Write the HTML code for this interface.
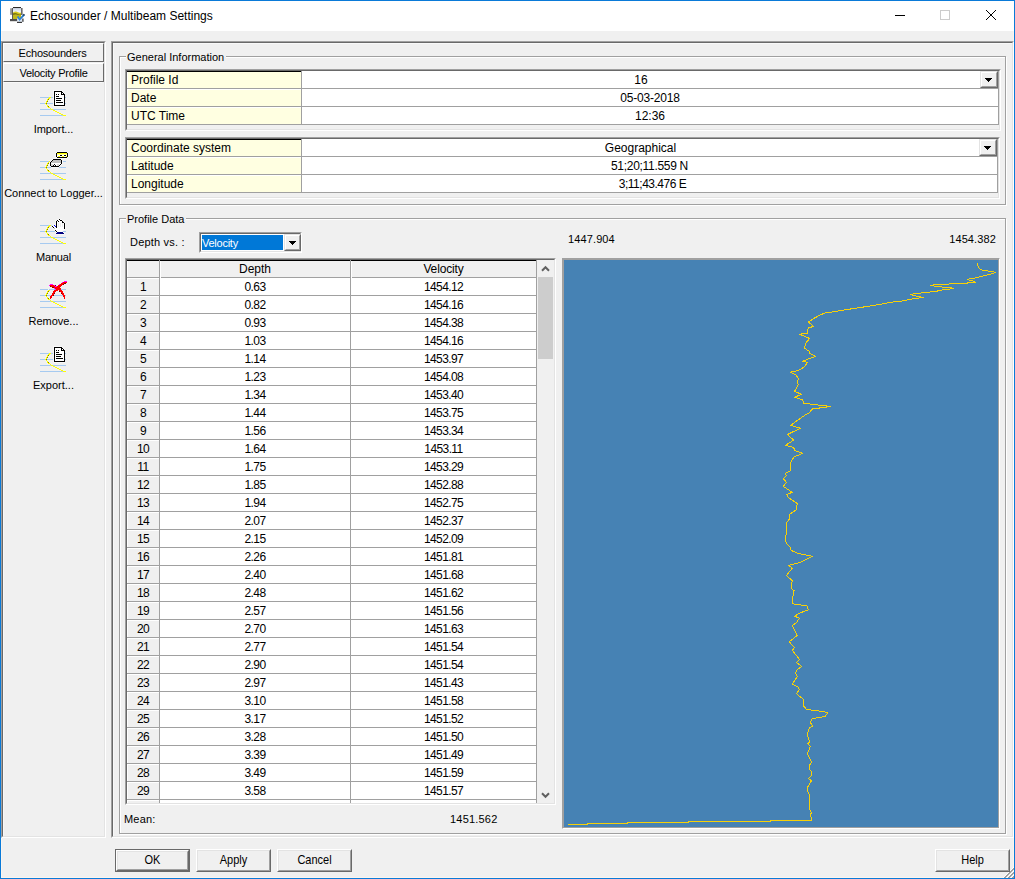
<!DOCTYPE html>
<html lang="en"><head><meta charset="utf-8"><title>Echosounder / Multibeam Settings</title>
<style>
html,body{margin:0;padding:0;}
body{width:1015px;height:879px;overflow:hidden;background:#f0f0f0;position:relative;
 font-family:"Liberation Sans",sans-serif;font-size:11px;color:#000;}
*{box-sizing:border-box;}
.a{position:absolute;}
.t{position:absolute;white-space:nowrap;line-height:1;}
.s11{font-size:11px;letter-spacing:-0.25px;}
.s12{font-size:12px;}
.sunk{position:absolute;border:1px solid;border-color:#a0a0a0 #fff #fff #a0a0a0;}
.sunk>.in{position:absolute;left:0;top:0;right:0;bottom:0;border:1px solid;border-color:#696969 #e3e3e3 #e3e3e3 #696969;}
.gb{position:absolute;border:1px solid #a0a0a0;box-shadow:1px 1px 0 #fff, inset 1px 1px 0 #fff;}
.gbl{position:absolute;background:#f0f0f0;white-space:nowrap;line-height:13px;height:13px;padding:0 2px;font-size:11px;letter-spacing:0px;}
.btn{position:absolute;border:1px solid;border-color:#fff #696969 #696969 #fff;background:#f0f0f0;}
.btn>.in{position:absolute;left:0;top:0;right:0;bottom:0;border:1px solid;border-color:#e3e3e3 #a0a0a0 #a0a0a0 #e3e3e3;}
.btn.sb{border-color:#e3e3e3 #696969 #696969 #e3e3e3;}
.btn.sb>.in{border-color:#fff #a0a0a0 #a0a0a0 #fff;}
.btn .lb{position:absolute;left:0;right:0;text-align:center;line-height:1;font-size:11px;white-space:nowrap;transform:scaleY(1.125);transform-origin:50% 10px;}
.hl{position:absolute;height:1px;}
.vl{position:absolute;width:1px;}
.fc{position:absolute;background:#ffffe1;border-top:1px solid #fff;}
.cell{position:absolute;text-align:center;white-space:nowrap;font-size:12px;line-height:16px;letter-spacing:-0.6px;}
</style></head><body>

<div class="a" style="left:0;top:0;width:1015px;height:879px;border:1px solid #0a7ad8;"></div>
<div class="a" style="left:1px;top:1px;width:1013px;height:30px;background:#fff;"></div>
<svg class="a" style="left:8px;top:5px" width="20" height="20" viewBox="8 5 20 20">
<defs><linearGradient id="sky" x1="0" y1="0" x2="0" y2="1"><stop offset="0" stop-color="#cfd9ea"/><stop offset="1" stop-color="#eef2fa"/></linearGradient>
<linearGradient id="chk" x1="0" y1="1" x2="1" y2="0"><stop offset="0" stop-color="#3a8ae0"/><stop offset="0.7" stop-color="#2478c8"/><stop offset="1" stop-color="#0c2038"/></linearGradient></defs>
<rect x="10.3" y="8.3" width="1.5" height="6.5" fill="#7a7a7a"/>
<rect x="12" y="8" width="1" height="12" fill="#5a5a5a"/>
<rect x="21" y="8" width="1.6" height="7" fill="#6a6a6a"/>
<rect x="13" y="7" width="8" height="1.3" fill="#2a2a2a"/>
<rect x="13" y="8.3" width="8" height="3.5" fill="url(#sky)"/>
<path d="M13 12.6 Q15.5 10.4 18 12.2 Q19.5 13 21 12.4 V19 H13Z" fill="#d4c81c"/>
<path d="M13 13.6 Q16 12.9 18 14.1 Q19.5 14.9 21 14.3 V15.3 Q19.5 15.7 18 15.1 Q16 14.1 13 14.9Z" fill="#5e5610"/>
<rect x="13" y="14.6" width="8" height="4.4" fill="#bcb41c" opacity="0.85"/>
<rect x="10" y="19" width="7.5" height="2.2" fill="#505050"/>
<rect x="17.3" y="18.2" width="6.2" height="4" fill="#dfe8f4"/>
<rect x="22" y="18.6" width="1.7" height="3.2" fill="#6a6a6a"/>
<rect x="17" y="21.8" width="5" height="1.2" fill="#3a3a3a"/>
<path d="M17.6 16.6 L19.6 19.6 L24.4 14.4" fill="none" stroke="url(#chk)" stroke-width="1.8" stroke-linecap="butt"/>
</svg>
<div class="t" id="title" style="left:30px;top:10px;font-size:12px;letter-spacing:0px;">Echosounder / Multibeam Settings</div>
<div class="a" style="left:895px;top:15px;width:10px;height:1px;background:#000;"></div>
<div class="a" style="left:940px;top:10px;width:10px;height:10px;border:1px solid #cccccc;"></div>
<svg class="a" style="left:985px;top:9px" width="12" height="12" viewBox="0 0 12 12"><path d="M1 1 L11 11 M11 1 L1 11" stroke="#000" stroke-width="1" fill="none"/></svg>
<div class="a" style="left:1px;top:31px;width:1013px;height:847px;border:1px solid #fcf5ee;border-top:none;"></div>
<div class="sunk" style="left:1px;top:41px;width:105px;height:797px;"><div class="in"></div></div>
<div class="a" style="left:3px;top:43px;width:101px;height:19px;border:1px solid;border-color:#fff #696969 #696969 #fff;"></div>
<div class="a" style="left:3px;top:63px;width:101px;height:19px;border:1px solid;border-color:#fff #696969 #696969 #fff;"></div>
<div class="a" style="left:3px;top:82px;width:100px;height:754px;border:1px solid;border-color:#f9f9f9 transparent transparent #f9f9f9;"></div>
<div class="t s11" id="bt1" style="left:2px;width:101px;text-align:center;top:48px;letter-spacing:-0.2px;">Echosounders</div>
<div class="t s11" id="bt2" style="left:3px;width:101px;text-align:center;top:68px;">Velocity Profile</div>
<svg class="a" style="left:36px;top:81px" width="36" height="36" viewBox="36 81 36 36" shape-rendering="crispEdges"><rect x="53" y="90" width="9" height="1" fill="#f8f8f8"/><rect x="53" y="91" width="1" height="1" fill="#f8f8f8"/><rect x="54" y="91" width="8" height="1" fill="#000000"/><rect x="62" y="91" width="1" height="1" fill="#f8f8f8"/><rect x="53" y="92" width="1" height="1" fill="#f8f8f8"/><rect x="54" y="92" width="1" height="1" fill="#000000"/><rect x="55" y="92" width="6" height="1" fill="#ffffff"/><rect x="61" y="92" width="2" height="1" fill="#000000"/><rect x="63" y="92" width="1" height="1" fill="#f8f8f8"/><rect x="53" y="93" width="1" height="1" fill="#f8f8f8"/><rect x="54" y="93" width="1" height="1" fill="#000000"/><rect x="55" y="93" width="6" height="1" fill="#ffffff"/><rect x="61" y="93" width="1" height="1" fill="#000000"/><rect x="62" y="93" width="1" height="1" fill="#ffffff"/><rect x="63" y="93" width="1" height="1" fill="#000000"/><rect x="64" y="93" width="1" height="1" fill="#f8f8f8"/><rect x="53" y="94" width="1" height="1" fill="#f8f8f8"/><rect x="54" y="94" width="1" height="1" fill="#000000"/><rect x="55" y="94" width="1" height="1" fill="#ffffff"/><rect x="56" y="94" width="1" height="1" fill="#000000"/><rect x="57" y="94" width="1" height="1" fill="#ffffff"/><rect x="58" y="94" width="1" height="1" fill="#000000"/><rect x="59" y="94" width="2" height="1" fill="#ffffff"/><rect x="61" y="94" width="4" height="1" fill="#000000"/><rect x="53" y="95" width="1" height="1" fill="#f8f8f8"/><rect x="54" y="95" width="1" height="1" fill="#000000"/><rect x="55" y="95" width="9" height="1" fill="#ffffff"/><rect x="64" y="95" width="1" height="1" fill="#000000"/><rect x="53" y="96" width="1" height="1" fill="#f8f8f8"/><rect x="54" y="96" width="1" height="1" fill="#000000"/><rect x="55" y="96" width="1" height="1" fill="#ffffff"/><rect x="56" y="96" width="3" height="1" fill="#000000"/><rect x="59" y="96" width="5" height="1" fill="#ffffff"/><rect x="64" y="96" width="1" height="1" fill="#000000"/><rect x="40" y="97" width="9" height="1" fill="#a6caf0"/><rect x="49" y="97" width="2" height="1" fill="#ffff00"/><rect x="51" y="97" width="2" height="1" fill="#a6caf0"/><rect x="53" y="97" width="1" height="1" fill="#f8f8f8"/><rect x="54" y="97" width="1" height="1" fill="#000000"/><rect x="55" y="97" width="9" height="1" fill="#ffffff"/><rect x="64" y="97" width="1" height="1" fill="#000000"/><rect x="65" y="97" width="1" height="1" fill="#a6caf0"/><rect x="48" y="98" width="2" height="1" fill="#ffff00"/><rect x="53" y="98" width="1" height="1" fill="#f8f8f8"/><rect x="54" y="98" width="1" height="1" fill="#000000"/><rect x="55" y="98" width="1" height="1" fill="#ffffff"/><rect x="56" y="98" width="6" height="1" fill="#000000"/><rect x="62" y="98" width="2" height="1" fill="#ffffff"/><rect x="64" y="98" width="1" height="1" fill="#000000"/><rect x="47" y="99" width="1" height="1" fill="#ffff00"/><rect x="48" y="99" width="1" height="1" fill="#808000"/><rect x="53" y="99" width="1" height="1" fill="#f8f8f8"/><rect x="54" y="99" width="1" height="1" fill="#000000"/><rect x="55" y="99" width="9" height="1" fill="#ffffff"/><rect x="64" y="99" width="1" height="1" fill="#000000"/><rect x="47" y="100" width="1" height="1" fill="#ffff00"/><rect x="53" y="100" width="1" height="1" fill="#f8f8f8"/><rect x="54" y="100" width="1" height="1" fill="#000000"/><rect x="55" y="100" width="1" height="1" fill="#ffffff"/><rect x="56" y="100" width="5" height="1" fill="#000000"/><rect x="61" y="100" width="3" height="1" fill="#ffffff"/><rect x="64" y="100" width="1" height="1" fill="#000000"/><rect x="46" y="101" width="1" height="1" fill="#ffff00"/><rect x="47" y="101" width="1" height="1" fill="#808000"/><rect x="53" y="101" width="1" height="1" fill="#f8f8f8"/><rect x="54" y="101" width="1" height="1" fill="#000000"/><rect x="55" y="101" width="9" height="1" fill="#ffffff"/><rect x="64" y="101" width="1" height="1" fill="#000000"/><rect x="46" y="102" width="1" height="1" fill="#ffff00"/><rect x="53" y="102" width="1" height="1" fill="#f8f8f8"/><rect x="54" y="102" width="1" height="1" fill="#000000"/><rect x="55" y="102" width="1" height="1" fill="#ffffff"/><rect x="56" y="102" width="7" height="1" fill="#000000"/><rect x="63" y="102" width="1" height="1" fill="#ffffff"/><rect x="64" y="102" width="1" height="1" fill="#000000"/><rect x="40" y="103" width="5" height="1" fill="#a6caf0"/><rect x="45" y="103" width="1" height="1" fill="#ffff00"/><rect x="46" y="103" width="1" height="1" fill="#808000"/><rect x="47" y="103" width="6" height="1" fill="#a6caf0"/><rect x="53" y="103" width="1" height="1" fill="#f8f8f8"/><rect x="54" y="103" width="1" height="1" fill="#000000"/><rect x="55" y="103" width="9" height="1" fill="#ffffff"/><rect x="64" y="103" width="1" height="1" fill="#000000"/><rect x="65" y="103" width="1" height="1" fill="#a6caf0"/><rect x="46" y="104" width="1" height="1" fill="#ffff00"/><rect x="53" y="104" width="1" height="1" fill="#f8f8f8"/><rect x="54" y="104" width="1" height="1" fill="#000000"/><rect x="55" y="104" width="9" height="1" fill="#ffffff"/><rect x="64" y="104" width="1" height="1" fill="#000000"/><rect x="47" y="105" width="1" height="1" fill="#ffff00"/><rect x="53" y="105" width="1" height="1" fill="#f8f8f8"/><rect x="54" y="105" width="11" height="1" fill="#000000"/><rect x="47" y="106" width="1" height="1" fill="#ffff00"/><rect x="48" y="106" width="1" height="1" fill="#808000"/><rect x="53" y="106" width="12" height="1" fill="#f8f8f8"/><rect x="48" y="107" width="2" height="1" fill="#ffff00"/><rect x="50" y="108" width="1" height="1" fill="#ffff00"/><rect x="40" y="109" width="11" height="1" fill="#a6caf0"/><rect x="51" y="109" width="2" height="1" fill="#ffff00"/><rect x="53" y="109" width="13" height="1" fill="#a6caf0"/><rect x="53" y="110" width="2" height="1" fill="#ffff00"/><rect x="55" y="111" width="2" height="1" fill="#ffff00"/><rect x="57" y="112" width="2" height="1" fill="#ffff00"/><rect x="59" y="113" width="2" height="1" fill="#ffff00"/><rect x="61" y="114" width="2" height="1" fill="#ffff00"/><rect x="40" y="115" width="23" height="1" fill="#a6caf0"/><rect x="63" y="115" width="3" height="1" fill="#ffff00"/></svg>
<svg class="a" style="left:36px;top:145px" width="36" height="36" viewBox="36 145 36 36" shape-rendering="crispEdges"><rect x="57" y="151" width="10" height="1" fill="#f8f8f8"/><rect x="56" y="152" width="1" height="1" fill="#f8f8f8"/><rect x="57" y="152" width="10" height="1" fill="#000000"/><rect x="67" y="152" width="1" height="1" fill="#f8f8f8"/><rect x="55" y="153" width="1" height="1" fill="#f8f8f8"/><rect x="56" y="153" width="1" height="1" fill="#000000"/><rect x="57" y="153" width="10" height="1" fill="#ffff00"/><rect x="67" y="153" width="1" height="1" fill="#000000"/><rect x="68" y="153" width="1" height="1" fill="#f8f8f8"/><rect x="55" y="154" width="1" height="1" fill="#f8f8f8"/><rect x="56" y="154" width="1" height="1" fill="#000000"/><rect x="57" y="154" width="10" height="1" fill="#ffffa0"/><rect x="67" y="154" width="1" height="1" fill="#000000"/><rect x="68" y="154" width="1" height="1" fill="#f8f8f8"/><rect x="55" y="155" width="1" height="1" fill="#f8f8f8"/><rect x="56" y="155" width="1" height="1" fill="#000000"/><rect x="57" y="155" width="3" height="1" fill="#ffffff"/><rect x="60" y="155" width="2" height="1" fill="#000000"/><rect x="62" y="155" width="2" height="1" fill="#ffffff"/><rect x="64" y="155" width="2" height="1" fill="#000000"/><rect x="66" y="155" width="1" height="1" fill="#ffffff"/><rect x="67" y="155" width="1" height="1" fill="#000000"/><rect x="68" y="155" width="1" height="1" fill="#f8f8f8"/><rect x="55" y="156" width="1" height="1" fill="#f8f8f8"/><rect x="56" y="156" width="1" height="1" fill="#000000"/><rect x="57" y="156" width="1" height="1" fill="#ffffff"/><rect x="58" y="156" width="2" height="1" fill="#ffff00"/><rect x="60" y="156" width="2" height="1" fill="#ffffff"/><rect x="62" y="156" width="2" height="1" fill="#ffff00"/><rect x="64" y="156" width="2" height="1" fill="#ffffff"/><rect x="66" y="156" width="1" height="1" fill="#ffff00"/><rect x="67" y="156" width="1" height="1" fill="#000000"/><rect x="68" y="156" width="1" height="1" fill="#f8f8f8"/><rect x="56" y="157" width="1" height="1" fill="#f8f8f8"/><rect x="57" y="157" width="10" height="1" fill="#000000"/><rect x="67" y="157" width="1" height="1" fill="#f8f8f8"/><rect x="53" y="158" width="14" height="1" fill="#f8f8f8"/><rect x="52" y="159" width="1" height="1" fill="#f8f8f8"/><rect x="53" y="159" width="8" height="1" fill="#000000"/><rect x="61" y="159" width="1" height="1" fill="#f8f8f8"/><rect x="51" y="160" width="1" height="1" fill="#f8f8f8"/><rect x="52" y="160" width="1" height="1" fill="#000000"/><rect x="53" y="160" width="8" height="1" fill="#c0c0c0"/><rect x="61" y="160" width="1" height="1" fill="#000000"/><rect x="62" y="160" width="1" height="1" fill="#f8f8f8"/><rect x="40" y="161" width="9" height="1" fill="#a6caf0"/><rect x="49" y="161" width="1" height="1" fill="#ffff00"/><rect x="50" y="161" width="1" height="1" fill="#f8f8f8"/><rect x="51" y="161" width="1" height="1" fill="#000000"/><rect x="52" y="161" width="9" height="1" fill="#c0c0c0"/><rect x="61" y="161" width="1" height="1" fill="#000000"/><rect x="62" y="161" width="1" height="1" fill="#f8f8f8"/><rect x="63" y="161" width="3" height="1" fill="#a6caf0"/><rect x="48" y="162" width="1" height="1" fill="#ffff00"/><rect x="49" y="162" width="1" height="1" fill="#f8f8f8"/><rect x="50" y="162" width="1" height="1" fill="#000000"/><rect x="51" y="162" width="10" height="1" fill="#c0c0c0"/><rect x="61" y="162" width="1" height="1" fill="#000000"/><rect x="62" y="162" width="1" height="1" fill="#f8f8f8"/><rect x="47" y="163" width="1" height="1" fill="#ffff00"/><rect x="48" y="163" width="1" height="1" fill="#808000"/><rect x="49" y="163" width="1" height="1" fill="#f8f8f8"/><rect x="50" y="163" width="1" height="1" fill="#000000"/><rect x="51" y="163" width="10" height="1" fill="#ffffff"/><rect x="61" y="163" width="1" height="1" fill="#000000"/><rect x="62" y="163" width="1" height="1" fill="#f8f8f8"/><rect x="47" y="164" width="1" height="1" fill="#ffff00"/><rect x="49" y="164" width="1" height="1" fill="#f8f8f8"/><rect x="50" y="164" width="1" height="1" fill="#000000"/><rect x="51" y="164" width="2" height="1" fill="#dcdcdc"/><rect x="53" y="164" width="1" height="1" fill="#ffffff"/><rect x="54" y="164" width="1" height="1" fill="#000000"/><rect x="55" y="164" width="2" height="1" fill="#ffffff"/><rect x="57" y="164" width="2" height="1" fill="#dcdcdc"/><rect x="59" y="164" width="1" height="1" fill="#ffffff"/><rect x="60" y="164" width="1" height="1" fill="#000000"/><rect x="61" y="164" width="1" height="1" fill="#f8f8f8"/><rect x="46" y="165" width="1" height="1" fill="#ffff00"/><rect x="47" y="165" width="1" height="1" fill="#808000"/><rect x="49" y="165" width="1" height="1" fill="#f8f8f8"/><rect x="50" y="165" width="1" height="1" fill="#000000"/><rect x="51" y="165" width="2" height="1" fill="#dcdcdc"/><rect x="53" y="165" width="1" height="1" fill="#000000"/><rect x="54" y="165" width="1" height="1" fill="#ffffff"/><rect x="55" y="165" width="1" height="1" fill="#000000"/><rect x="56" y="165" width="1" height="1" fill="#ffffff"/><rect x="57" y="165" width="2" height="1" fill="#dcdcdc"/><rect x="59" y="165" width="1" height="1" fill="#000000"/><rect x="60" y="165" width="1" height="1" fill="#f8f8f8"/><rect x="46" y="166" width="1" height="1" fill="#ffff00"/><rect x="50" y="166" width="1" height="1" fill="#f8f8f8"/><rect x="51" y="166" width="8" height="1" fill="#000000"/><rect x="59" y="166" width="1" height="1" fill="#f8f8f8"/><rect x="40" y="167" width="5" height="1" fill="#a6caf0"/><rect x="45" y="167" width="1" height="1" fill="#ffff00"/><rect x="46" y="167" width="1" height="1" fill="#808000"/><rect x="47" y="167" width="4" height="1" fill="#a6caf0"/><rect x="51" y="167" width="8" height="1" fill="#f8f8f8"/><rect x="59" y="167" width="7" height="1" fill="#a6caf0"/><rect x="46" y="168" width="1" height="1" fill="#ffff00"/><rect x="47" y="169" width="1" height="1" fill="#ffff00"/><rect x="47" y="170" width="1" height="1" fill="#ffff00"/><rect x="48" y="170" width="1" height="1" fill="#808000"/><rect x="48" y="171" width="2" height="1" fill="#ffff00"/><rect x="50" y="172" width="1" height="1" fill="#ffff00"/><rect x="40" y="173" width="11" height="1" fill="#a6caf0"/><rect x="51" y="173" width="2" height="1" fill="#ffff00"/><rect x="53" y="173" width="13" height="1" fill="#a6caf0"/><rect x="53" y="174" width="2" height="1" fill="#ffff00"/><rect x="55" y="175" width="2" height="1" fill="#ffff00"/><rect x="57" y="176" width="2" height="1" fill="#ffff00"/><rect x="59" y="177" width="2" height="1" fill="#ffff00"/><rect x="61" y="178" width="2" height="1" fill="#ffff00"/><rect x="40" y="179" width="23" height="1" fill="#a6caf0"/><rect x="63" y="179" width="3" height="1" fill="#ffff00"/></svg>
<svg class="a" style="left:36px;top:209px" width="36" height="36" viewBox="36 209 36 36" shape-rendering="crispEdges"><rect x="59" y="218" width="1" height="1" fill="#f8f8f8"/><rect x="57" y="219" width="2" height="1" fill="#f8f8f8"/><rect x="59" y="219" width="1" height="1" fill="#000000"/><rect x="60" y="219" width="2" height="1" fill="#f8f8f8"/><rect x="56" y="220" width="1" height="1" fill="#f8f8f8"/><rect x="57" y="220" width="1" height="1" fill="#000000"/><rect x="58" y="220" width="2" height="1" fill="#ffffff"/><rect x="60" y="220" width="2" height="1" fill="#000000"/><rect x="62" y="220" width="1" height="1" fill="#f8f8f8"/><rect x="55" y="221" width="1" height="1" fill="#f8f8f8"/><rect x="56" y="221" width="1" height="1" fill="#000000"/><rect x="57" y="221" width="1" height="1" fill="#ffffff"/><rect x="58" y="221" width="1" height="1" fill="#000000"/><rect x="59" y="221" width="3" height="1" fill="#ffffff"/><rect x="62" y="221" width="1" height="1" fill="#000000"/><rect x="63" y="221" width="1" height="1" fill="#f8f8f8"/><rect x="55" y="222" width="1" height="1" fill="#f8f8f8"/><rect x="56" y="222" width="1" height="1" fill="#000000"/><rect x="57" y="222" width="5" height="1" fill="#ffffff"/><rect x="62" y="222" width="2" height="1" fill="#000000"/><rect x="64" y="222" width="1" height="1" fill="#f8f8f8"/><rect x="55" y="223" width="1" height="1" fill="#f8f8f8"/><rect x="56" y="223" width="1" height="1" fill="#000000"/><rect x="57" y="223" width="1" height="1" fill="#ffffff"/><rect x="58" y="223" width="1" height="1" fill="#ececec"/><rect x="59" y="223" width="1" height="1" fill="#ffffff"/><rect x="60" y="223" width="1" height="1" fill="#ececec"/><rect x="61" y="223" width="1" height="1" fill="#ffffff"/><rect x="62" y="223" width="1" height="1" fill="#ececec"/><rect x="63" y="223" width="1" height="1" fill="#ffffff"/><rect x="64" y="223" width="1" height="1" fill="#000000"/><rect x="65" y="223" width="1" height="1" fill="#f8f8f8"/><rect x="54" y="224" width="2" height="1" fill="#f8f8f8"/><rect x="56" y="224" width="1" height="1" fill="#000000"/><rect x="57" y="224" width="1" height="1" fill="#ffffff"/><rect x="58" y="224" width="1" height="1" fill="#ececec"/><rect x="59" y="224" width="1" height="1" fill="#ffffff"/><rect x="60" y="224" width="1" height="1" fill="#ececec"/><rect x="61" y="224" width="1" height="1" fill="#ffffff"/><rect x="62" y="224" width="1" height="1" fill="#ececec"/><rect x="63" y="224" width="1" height="1" fill="#ffffff"/><rect x="64" y="224" width="1" height="1" fill="#000000"/><rect x="65" y="224" width="1" height="1" fill="#f8f8f8"/><rect x="40" y="225" width="9" height="1" fill="#a6caf0"/><rect x="49" y="225" width="2" height="1" fill="#ffff00"/><rect x="51" y="225" width="1" height="1" fill="#a6caf0"/><rect x="52" y="225" width="2" height="1" fill="#f8f8f8"/><rect x="54" y="225" width="1" height="1" fill="#0000ff"/><rect x="55" y="225" width="1" height="1" fill="#f8f8f8"/><rect x="56" y="225" width="1" height="1" fill="#000000"/><rect x="57" y="225" width="1" height="1" fill="#ffffff"/><rect x="58" y="225" width="1" height="1" fill="#ececec"/><rect x="59" y="225" width="1" height="1" fill="#ffffff"/><rect x="60" y="225" width="1" height="1" fill="#ececec"/><rect x="61" y="225" width="1" height="1" fill="#ffffff"/><rect x="62" y="225" width="1" height="1" fill="#ececec"/><rect x="63" y="225" width="1" height="1" fill="#ffffff"/><rect x="64" y="225" width="1" height="1" fill="#000000"/><rect x="65" y="225" width="1" height="1" fill="#f8f8f8"/><rect x="48" y="226" width="2" height="1" fill="#ffff00"/><rect x="51" y="226" width="1" height="1" fill="#f8f8f8"/><rect x="52" y="226" width="1" height="1" fill="#000000"/><rect x="53" y="226" width="2" height="1" fill="#ffffff"/><rect x="55" y="226" width="1" height="1" fill="#0000ff"/><rect x="56" y="226" width="1" height="1" fill="#000000"/><rect x="57" y="226" width="1" height="1" fill="#ffffff"/><rect x="58" y="226" width="1" height="1" fill="#ececec"/><rect x="59" y="226" width="1" height="1" fill="#ffffff"/><rect x="60" y="226" width="1" height="1" fill="#ececec"/><rect x="61" y="226" width="1" height="1" fill="#ffffff"/><rect x="62" y="226" width="1" height="1" fill="#ececec"/><rect x="63" y="226" width="1" height="1" fill="#ffffff"/><rect x="64" y="226" width="1" height="1" fill="#000000"/><rect x="65" y="226" width="1" height="1" fill="#f8f8f8"/><rect x="47" y="227" width="1" height="1" fill="#ffff00"/><rect x="48" y="227" width="1" height="1" fill="#808000"/><rect x="52" y="227" width="1" height="1" fill="#f8f8f8"/><rect x="53" y="227" width="1" height="1" fill="#000000"/><rect x="54" y="227" width="2" height="1" fill="#ffffff"/><rect x="56" y="227" width="1" height="1" fill="#000000"/><rect x="57" y="227" width="7" height="1" fill="#ffffff"/><rect x="64" y="227" width="1" height="1" fill="#000000"/><rect x="65" y="227" width="1" height="1" fill="#f8f8f8"/><rect x="47" y="228" width="1" height="1" fill="#ffff00"/><rect x="53" y="228" width="1" height="1" fill="#f8f8f8"/><rect x="54" y="228" width="1" height="1" fill="#c0c0c0"/><rect x="55" y="228" width="9" height="1" fill="#ffffff"/><rect x="64" y="228" width="1" height="1" fill="#000000"/><rect x="65" y="228" width="1" height="1" fill="#f8f8f8"/><rect x="46" y="229" width="1" height="1" fill="#ffff00"/><rect x="47" y="229" width="1" height="1" fill="#808000"/><rect x="54" y="229" width="1" height="1" fill="#f8f8f8"/><rect x="55" y="229" width="9" height="1" fill="#ffffff"/><rect x="64" y="229" width="1" height="1" fill="#f8f8f8"/><rect x="46" y="230" width="1" height="1" fill="#ffff00"/><rect x="54" y="230" width="1" height="1" fill="#f8f8f8"/><rect x="55" y="230" width="1" height="1" fill="#000000"/><rect x="56" y="230" width="7" height="1" fill="#ffffff"/><rect x="63" y="230" width="1" height="1" fill="#f8f8f8"/><rect x="40" y="231" width="5" height="1" fill="#a6caf0"/><rect x="45" y="231" width="1" height="1" fill="#ffff00"/><rect x="46" y="231" width="1" height="1" fill="#808000"/><rect x="47" y="231" width="8" height="1" fill="#a6caf0"/><rect x="55" y="231" width="1" height="1" fill="#f8f8f8"/><rect x="56" y="231" width="1" height="1" fill="#000000"/><rect x="57" y="231" width="5" height="1" fill="#ffffff"/><rect x="62" y="231" width="1" height="1" fill="#f8f8f8"/><rect x="63" y="231" width="3" height="1" fill="#a6caf0"/><rect x="46" y="232" width="1" height="1" fill="#ffff00"/><rect x="56" y="232" width="1" height="1" fill="#f8f8f8"/><rect x="57" y="232" width="6" height="1" fill="#000080"/><rect x="63" y="232" width="1" height="1" fill="#f8f8f8"/><rect x="47" y="233" width="1" height="1" fill="#ffff00"/><rect x="55" y="233" width="1" height="1" fill="#f8f8f8"/><rect x="56" y="233" width="8" height="1" fill="#000080"/><rect x="64" y="233" width="1" height="1" fill="#f8f8f8"/><rect x="47" y="234" width="1" height="1" fill="#ffff00"/><rect x="48" y="234" width="1" height="1" fill="#808000"/><rect x="56" y="234" width="8" height="1" fill="#f8f8f8"/><rect x="48" y="235" width="2" height="1" fill="#ffff00"/><rect x="50" y="236" width="1" height="1" fill="#ffff00"/><rect x="40" y="237" width="11" height="1" fill="#a6caf0"/><rect x="51" y="237" width="2" height="1" fill="#ffff00"/><rect x="53" y="237" width="13" height="1" fill="#a6caf0"/><rect x="53" y="238" width="2" height="1" fill="#ffff00"/><rect x="55" y="239" width="2" height="1" fill="#ffff00"/><rect x="57" y="240" width="2" height="1" fill="#ffff00"/><rect x="59" y="241" width="2" height="1" fill="#ffff00"/><rect x="61" y="242" width="2" height="1" fill="#ffff00"/><rect x="40" y="243" width="23" height="1" fill="#a6caf0"/><rect x="63" y="243" width="3" height="1" fill="#ffff00"/></svg>
<svg class="a" style="left:36px;top:273px" width="36" height="36" viewBox="36 273 36 36" shape-rendering="crispEdges"><rect x="64" y="281" width="3" height="1" fill="#ff00ff"/><rect x="62" y="282" width="1" height="1" fill="#ff00ff"/><rect x="63" y="282" width="4" height="1" fill="#ff0000"/><rect x="61" y="283" width="3" height="1" fill="#ff0000"/><rect x="64" y="283" width="2" height="1" fill="#800000"/><rect x="50" y="284" width="3" height="1" fill="#ff00ff"/><rect x="59" y="284" width="1" height="1" fill="#ff00ff"/><rect x="60" y="284" width="3" height="1" fill="#ff0000"/><rect x="63" y="284" width="1" height="1" fill="#800000"/><rect x="49" y="285" width="1" height="1" fill="#ff00ff"/><rect x="50" y="285" width="4" height="1" fill="#ff0000"/><rect x="54" y="285" width="1" height="1" fill="#ff00ff"/><rect x="55" y="285" width="1" height="1" fill="#800000"/><rect x="58" y="285" width="4" height="1" fill="#ff0000"/><rect x="50" y="286" width="1" height="1" fill="#800000"/><rect x="51" y="286" width="4" height="1" fill="#ff0000"/><rect x="55" y="286" width="2" height="1" fill="#ff00ff"/><rect x="57" y="286" width="4" height="1" fill="#ff0000"/><rect x="52" y="287" width="2" height="1" fill="#800000"/><rect x="54" y="287" width="6" height="1" fill="#ff0000"/><rect x="54" y="288" width="1" height="1" fill="#ff00ff"/><rect x="55" y="288" width="6" height="1" fill="#ff0000"/><rect x="40" y="289" width="8" height="1" fill="#a6caf0"/><rect x="48" y="289" width="1" height="1" fill="#f8f8f8"/><rect x="49" y="289" width="6" height="1" fill="#a6caf0"/><rect x="55" y="289" width="1" height="1" fill="#ff00ff"/><rect x="56" y="289" width="5" height="1" fill="#ff0000"/><rect x="61" y="289" width="5" height="1" fill="#a6caf0"/><rect x="48" y="290" width="2" height="1" fill="#ffff00"/><rect x="54" y="290" width="4" height="1" fill="#ff0000"/><rect x="59" y="290" width="3" height="1" fill="#ff0000"/><rect x="47" y="291" width="1" height="1" fill="#ffff00"/><rect x="48" y="291" width="1" height="1" fill="#808000"/><rect x="53" y="291" width="3" height="1" fill="#ff0000"/><rect x="59" y="291" width="1" height="1" fill="#800000"/><rect x="60" y="291" width="3" height="1" fill="#ff0000"/><rect x="47" y="292" width="1" height="1" fill="#ffff00"/><rect x="53" y="292" width="2" height="1" fill="#ff0000"/><rect x="61" y="292" width="2" height="1" fill="#ff0000"/><rect x="46" y="293" width="1" height="1" fill="#ffff00"/><rect x="47" y="293" width="1" height="1" fill="#808000"/><rect x="52" y="293" width="2" height="1" fill="#ff0000"/><rect x="54" y="293" width="1" height="1" fill="#800000"/><rect x="61" y="293" width="1" height="1" fill="#800000"/><rect x="62" y="293" width="2" height="1" fill="#ff0000"/><rect x="46" y="294" width="1" height="1" fill="#ffff00"/><rect x="52" y="294" width="2" height="1" fill="#ff0000"/><rect x="62" y="294" width="2" height="1" fill="#ff0000"/><rect x="40" y="295" width="5" height="1" fill="#a6caf0"/><rect x="45" y="295" width="1" height="1" fill="#ffff00"/><rect x="46" y="295" width="1" height="1" fill="#808000"/><rect x="47" y="295" width="4" height="1" fill="#a6caf0"/><rect x="51" y="295" width="2" height="1" fill="#ff0000"/><rect x="53" y="295" width="1" height="1" fill="#800000"/><rect x="54" y="295" width="9" height="1" fill="#a6caf0"/><rect x="63" y="295" width="2" height="1" fill="#ff0000"/><rect x="65" y="295" width="1" height="1" fill="#a6caf0"/><rect x="46" y="296" width="1" height="1" fill="#ffff00"/><rect x="50" y="296" width="2" height="1" fill="#ff0000"/><rect x="63" y="296" width="2" height="1" fill="#ff0000"/><rect x="47" y="297" width="1" height="1" fill="#ffff00"/><rect x="50" y="297" width="2" height="1" fill="#ff0000"/><rect x="64" y="297" width="1" height="1" fill="#ff0000"/><rect x="47" y="298" width="1" height="1" fill="#ffff00"/><rect x="48" y="298" width="1" height="1" fill="#808000"/><rect x="50" y="298" width="1" height="1" fill="#ff0000"/><rect x="64" y="298" width="1" height="1" fill="#ff0000"/><rect x="48" y="299" width="2" height="1" fill="#ffff00"/><rect x="50" y="300" width="1" height="1" fill="#ffff00"/><rect x="40" y="301" width="11" height="1" fill="#a6caf0"/><rect x="51" y="301" width="2" height="1" fill="#ffff00"/><rect x="53" y="301" width="13" height="1" fill="#a6caf0"/><rect x="53" y="302" width="2" height="1" fill="#ffff00"/><rect x="55" y="303" width="2" height="1" fill="#ffff00"/><rect x="57" y="304" width="2" height="1" fill="#ffff00"/><rect x="59" y="305" width="2" height="1" fill="#ffff00"/><rect x="61" y="306" width="2" height="1" fill="#ffff00"/><rect x="40" y="307" width="23" height="1" fill="#a6caf0"/><rect x="63" y="307" width="3" height="1" fill="#ffff00"/></svg>
<svg class="a" style="left:36px;top:337px" width="36" height="36" viewBox="36 337 36 36" shape-rendering="crispEdges"><rect x="53" y="346" width="9" height="1" fill="#f8f8f8"/><rect x="53" y="347" width="1" height="1" fill="#f8f8f8"/><rect x="54" y="347" width="8" height="1" fill="#000000"/><rect x="62" y="347" width="1" height="1" fill="#f8f8f8"/><rect x="53" y="348" width="1" height="1" fill="#f8f8f8"/><rect x="54" y="348" width="1" height="1" fill="#000000"/><rect x="55" y="348" width="6" height="1" fill="#ffffff"/><rect x="61" y="348" width="2" height="1" fill="#000000"/><rect x="63" y="348" width="1" height="1" fill="#f8f8f8"/><rect x="53" y="349" width="1" height="1" fill="#f8f8f8"/><rect x="54" y="349" width="1" height="1" fill="#000000"/><rect x="55" y="349" width="6" height="1" fill="#ffffff"/><rect x="61" y="349" width="1" height="1" fill="#000000"/><rect x="62" y="349" width="1" height="1" fill="#ffffff"/><rect x="63" y="349" width="1" height="1" fill="#000000"/><rect x="64" y="349" width="1" height="1" fill="#f8f8f8"/><rect x="53" y="350" width="1" height="1" fill="#f8f8f8"/><rect x="54" y="350" width="1" height="1" fill="#000000"/><rect x="55" y="350" width="1" height="1" fill="#ffffff"/><rect x="56" y="350" width="1" height="1" fill="#000000"/><rect x="57" y="350" width="1" height="1" fill="#ffffff"/><rect x="58" y="350" width="1" height="1" fill="#000000"/><rect x="59" y="350" width="2" height="1" fill="#ffffff"/><rect x="61" y="350" width="4" height="1" fill="#000000"/><rect x="53" y="351" width="1" height="1" fill="#f8f8f8"/><rect x="54" y="351" width="1" height="1" fill="#000000"/><rect x="55" y="351" width="9" height="1" fill="#ffffff"/><rect x="64" y="351" width="1" height="1" fill="#000000"/><rect x="53" y="352" width="1" height="1" fill="#f8f8f8"/><rect x="54" y="352" width="1" height="1" fill="#000000"/><rect x="55" y="352" width="1" height="1" fill="#ffffff"/><rect x="56" y="352" width="3" height="1" fill="#000000"/><rect x="59" y="352" width="5" height="1" fill="#ffffff"/><rect x="64" y="352" width="1" height="1" fill="#000000"/><rect x="40" y="353" width="9" height="1" fill="#a6caf0"/><rect x="49" y="353" width="2" height="1" fill="#ffff00"/><rect x="51" y="353" width="2" height="1" fill="#a6caf0"/><rect x="53" y="353" width="1" height="1" fill="#f8f8f8"/><rect x="54" y="353" width="1" height="1" fill="#000000"/><rect x="55" y="353" width="9" height="1" fill="#ffffff"/><rect x="64" y="353" width="1" height="1" fill="#000000"/><rect x="65" y="353" width="1" height="1" fill="#a6caf0"/><rect x="48" y="354" width="2" height="1" fill="#ffff00"/><rect x="53" y="354" width="1" height="1" fill="#f8f8f8"/><rect x="54" y="354" width="1" height="1" fill="#000000"/><rect x="55" y="354" width="1" height="1" fill="#ffffff"/><rect x="56" y="354" width="6" height="1" fill="#000000"/><rect x="62" y="354" width="2" height="1" fill="#ffffff"/><rect x="64" y="354" width="1" height="1" fill="#000000"/><rect x="47" y="355" width="1" height="1" fill="#ffff00"/><rect x="48" y="355" width="1" height="1" fill="#808000"/><rect x="53" y="355" width="1" height="1" fill="#f8f8f8"/><rect x="54" y="355" width="1" height="1" fill="#000000"/><rect x="55" y="355" width="9" height="1" fill="#ffffff"/><rect x="64" y="355" width="1" height="1" fill="#000000"/><rect x="47" y="356" width="1" height="1" fill="#ffff00"/><rect x="53" y="356" width="1" height="1" fill="#f8f8f8"/><rect x="54" y="356" width="1" height="1" fill="#000000"/><rect x="55" y="356" width="1" height="1" fill="#ffffff"/><rect x="56" y="356" width="5" height="1" fill="#000000"/><rect x="61" y="356" width="3" height="1" fill="#ffffff"/><rect x="64" y="356" width="1" height="1" fill="#000000"/><rect x="46" y="357" width="1" height="1" fill="#ffff00"/><rect x="47" y="357" width="1" height="1" fill="#808000"/><rect x="53" y="357" width="1" height="1" fill="#f8f8f8"/><rect x="54" y="357" width="1" height="1" fill="#000000"/><rect x="55" y="357" width="9" height="1" fill="#ffffff"/><rect x="64" y="357" width="1" height="1" fill="#000000"/><rect x="46" y="358" width="1" height="1" fill="#ffff00"/><rect x="53" y="358" width="1" height="1" fill="#f8f8f8"/><rect x="54" y="358" width="1" height="1" fill="#000000"/><rect x="55" y="358" width="1" height="1" fill="#ffffff"/><rect x="56" y="358" width="7" height="1" fill="#000000"/><rect x="63" y="358" width="1" height="1" fill="#ffffff"/><rect x="64" y="358" width="1" height="1" fill="#000000"/><rect x="40" y="359" width="5" height="1" fill="#a6caf0"/><rect x="45" y="359" width="1" height="1" fill="#ffff00"/><rect x="46" y="359" width="1" height="1" fill="#808000"/><rect x="47" y="359" width="6" height="1" fill="#a6caf0"/><rect x="53" y="359" width="1" height="1" fill="#f8f8f8"/><rect x="54" y="359" width="1" height="1" fill="#000000"/><rect x="55" y="359" width="9" height="1" fill="#ffffff"/><rect x="64" y="359" width="1" height="1" fill="#000000"/><rect x="65" y="359" width="1" height="1" fill="#a6caf0"/><rect x="46" y="360" width="1" height="1" fill="#ffff00"/><rect x="53" y="360" width="1" height="1" fill="#f8f8f8"/><rect x="54" y="360" width="1" height="1" fill="#000000"/><rect x="55" y="360" width="9" height="1" fill="#ffffff"/><rect x="64" y="360" width="1" height="1" fill="#000000"/><rect x="47" y="361" width="1" height="1" fill="#ffff00"/><rect x="53" y="361" width="1" height="1" fill="#f8f8f8"/><rect x="54" y="361" width="11" height="1" fill="#000000"/><rect x="47" y="362" width="1" height="1" fill="#ffff00"/><rect x="48" y="362" width="1" height="1" fill="#808000"/><rect x="53" y="362" width="12" height="1" fill="#f8f8f8"/><rect x="48" y="363" width="2" height="1" fill="#ffff00"/><rect x="50" y="364" width="1" height="1" fill="#ffff00"/><rect x="40" y="365" width="11" height="1" fill="#a6caf0"/><rect x="51" y="365" width="2" height="1" fill="#ffff00"/><rect x="53" y="365" width="13" height="1" fill="#a6caf0"/><rect x="53" y="366" width="2" height="1" fill="#ffff00"/><rect x="55" y="367" width="2" height="1" fill="#ffff00"/><rect x="57" y="368" width="2" height="1" fill="#ffff00"/><rect x="59" y="369" width="2" height="1" fill="#ffff00"/><rect x="61" y="370" width="2" height="1" fill="#ffff00"/><rect x="40" y="371" width="23" height="1" fill="#a6caf0"/><rect x="63" y="371" width="3" height="1" fill="#ffff00"/></svg>
<div class="t s11" id="l1" style="left:3px;width:101px;text-align:center;top:124px;letter-spacing:-0.12px;">Import...</div>
<div class="t s11" id="l2" style="left:3px;width:101px;text-align:center;top:188px;letter-spacing:-0.02px;">Connect to Logger...</div>
<div class="t s11" id="l3" style="left:3px;width:101px;text-align:center;top:252px;letter-spacing:-0.2px;">Manual</div>
<div class="t s11" id="l4" style="left:3px;width:101px;text-align:center;top:316px;letter-spacing:-0.02px;">Remove...</div>
<div class="t s11" id="l5" style="left:3px;width:101px;text-align:center;top:380px;letter-spacing:0.0px;">Export...</div>
<div class="sunk" style="left:111px;top:41px;width:903px;height:797px;"><div class="in" style="box-shadow:inset 1px 1px 0 #f9f9f9;"></div></div>
<div class="gb" style="left:119px;top:56px;width:887px;height:149px;"></div>
<div class="gbl" id="g1" style="left:126px;top:51px;padding-left:1px;">General Information</div>
<div class="gb" style="left:119px;top:218px;width:887px;height:616px;"></div>
<div class="gbl" id="g2" style="left:126px;top:213px;padding-left:1px;">Profile Data</div>
<div class="sunk" style="left:125px;top:69px;width:876px;height:62px;"><div class="in"></div></div><div class="a" style="left:302px;top:71px;width:696px;height:53px;background:#fff;"></div><div class="hl" style="left:127px;top:71px;width:174px;background:#000;"></div><div class="a" style="left:127px;top:72px;width:174px;height:16px;background:#ffffe1;"></div><div class="vl" style="left:127px;top:72px;height:16px;background:#fff;"></div><div class="hl" style="left:127px;top:88px;width:871px;background:#a0a0a0;"></div><div class="t s12" id="pn0" style="left:131px;top:74px;">Profile Id</div><div class="t s12" id="pv0" style="left:302px;width:678px;text-align:center;top:74px;letter-spacing:0px;">16</div><div class="a" style="left:127px;top:89px;width:174px;height:17px;background:#ffffe1;border-top:1px solid #fff;"></div><div class="vl" style="left:127px;top:90px;height:16px;background:#fff;"></div><div class="hl" style="left:127px;top:106px;width:871px;background:#a0a0a0;"></div><div class="t s12" id="pn1" style="left:131px;top:92px;">Date</div><div class="t s12" id="pv1" style="left:302px;width:696px;text-align:center;top:92px;letter-spacing:-0.2px;">05-03-2018</div><div class="a" style="left:127px;top:107px;width:174px;height:17px;background:#ffffe1;border-top:1px solid #fff;"></div><div class="vl" style="left:127px;top:108px;height:16px;background:#fff;"></div><div class="hl" style="left:127px;top:124px;width:871px;background:#a0a0a0;"></div><div class="t s12" id="pn2" style="left:131px;top:110px;">UTC Time</div><div class="t s12" id="pv2" style="left:302px;width:696px;text-align:center;top:110px;letter-spacing:0px;">12:36</div><div class="vl" style="left:301px;top:71px;height:54px;background:#a0a0a0;"></div><div class="vl" style="left:998px;top:71px;height:54px;background:#a0a0a0;"></div><div class="btn sb" style="left:980px;top:71px;width:18px;height:17px;"><div class="in"></div></div><svg class="a" style="left:985px;top:78px" width="7" height="4" viewBox="0 0 7 4" shape-rendering="crispEdges"><path d="M0 0H7L3.5 4Z" fill="#000"/><rect x="0" y="0" width="7" height="1"/><rect x="1" y="1" width="5" height="1"/><rect x="2" y="2" width="3" height="1"/><rect x="3" y="3" width="1" height="1"/></svg>
<div class="sunk" style="left:125px;top:137px;width:875px;height:62px;"><div class="in"></div></div><div class="a" style="left:302px;top:139px;width:695px;height:53px;background:#fff;"></div><div class="hl" style="left:127px;top:139px;width:174px;background:#000;"></div><div class="a" style="left:127px;top:140px;width:174px;height:16px;background:#ffffe1;"></div><div class="vl" style="left:127px;top:140px;height:16px;background:#fff;"></div><div class="hl" style="left:127px;top:156px;width:870px;background:#a0a0a0;"></div><div class="t s12" id="qn0" style="left:131px;top:142px;">Coordinate system</div><div class="t s12" id="qv0" style="left:302px;width:677px;text-align:center;top:142px;letter-spacing:0px;">Geographical</div><div class="a" style="left:127px;top:157px;width:174px;height:17px;background:#ffffe1;border-top:1px solid #fff;"></div><div class="vl" style="left:127px;top:158px;height:16px;background:#fff;"></div><div class="hl" style="left:127px;top:174px;width:870px;background:#a0a0a0;"></div><div class="t s12" id="qn1" style="left:131px;top:160px;">Latitude</div><div class="t s12" id="qv1" style="left:302px;width:695px;text-align:center;top:160px;letter-spacing:-0.3px;">51;20;11.559 N</div><div class="a" style="left:127px;top:175px;width:174px;height:17px;background:#ffffe1;border-top:1px solid #fff;"></div><div class="vl" style="left:127px;top:176px;height:16px;background:#fff;"></div><div class="hl" style="left:127px;top:192px;width:870px;background:#a0a0a0;"></div><div class="t s12" id="qn2" style="left:131px;top:178px;">Longitude</div><div class="t s12" id="qv2" style="left:305px;width:695px;text-align:center;top:178px;letter-spacing:-0.5px;">3;11;43.476 E</div><div class="vl" style="left:301px;top:139px;height:54px;background:#a0a0a0;"></div><div class="vl" style="left:997px;top:139px;height:54px;background:#a0a0a0;"></div><div class="btn sb" style="left:979px;top:139px;width:18px;height:17px;"><div class="in"></div></div><svg class="a" style="left:984px;top:146px" width="7" height="4" viewBox="0 0 7 4" shape-rendering="crispEdges"><path d="M0 0H7L3.5 4Z" fill="#000"/><rect x="0" y="0" width="7" height="1"/><rect x="1" y="1" width="5" height="1"/><rect x="2" y="2" width="3" height="1"/><rect x="3" y="3" width="1" height="1"/></svg>
<div class="t s11" id="dv" style="left:130px;top:237px;letter-spacing:0.2px;">Depth vs. :</div>
<div class="sunk" style="left:199px;top:232px;width:103px;height:21px;"><div class="in" style="background:#fff;"></div></div>
<div class="a" style="left:202px;top:235px;width:81px;height:15px;background:#0078d7;"></div>
<div class="t s11" id="vel" style="left:202px;top:238px;color:#fff;">Velocity</div>
<div class="btn sb" style="left:284px;top:234px;width:17px;height:17px;"><div class="in"></div></div>
<svg class="a" style="left:289px;top:241px" width="7" height="4" viewBox="0 0 7 4" shape-rendering="crispEdges"><rect x="0" y="0" width="7" height="1"/><rect x="1" y="1" width="5" height="1"/><rect x="2" y="2" width="3" height="1"/><rect x="3" y="3" width="1" height="1"/></svg>
<div class="t s11" id="cl" style="left:568px;top:234px;letter-spacing:0.12px;">1447.904</div>
<div class="t s11" id="cr" style="right:19px;top:234px;letter-spacing:0.12px;">1454.382</div>
<div class="sunk" style="left:125px;top:258px;width:431px;height:547px;"><div class="in"></div></div>
<div class="a" style="left:127px;top:260px;width:427px;height:543px;background:#fff;overflow:hidden;" id="tb">
<div class="hl" style="left:0;top:0;width:410px;background:#000;"></div><div class="a" style="left:0;top:1px;width:32px;height:16px;background:#f0f0f0;"></div><div class="a" style="left:33px;top:1px;width:190px;height:16px;background:#f0f0f0;border-left:1px solid #fff;"></div><div class="a" style="left:224px;top:1px;width:186px;height:16px;background:#f0f0f0;border-left:1px solid #fff;"></div><div class="cell" id="hd" style="left:33px;width:190px;top:1px;letter-spacing:0;">Depth</div><div class="cell" id="hv" style="left:224px;width:185px;top:1px;letter-spacing:-0.15px;">Velocity</div><div class="a" style="left:0;top:18px;width:32px;height:525px;background:#f0f0f0;"></div><div class="vl" style="left:0;top:1px;height:542px;background:#fff;"></div><div class="hl" style="left:0;top:17px;width:410px;background:#a0a0a0;"></div><div class="hl" style="left:0;top:18px;width:32px;background:#fff;"></div><div class="hl" style="left:0;top:35px;width:410px;background:#a0a0a0;"></div><div class="hl" style="left:0;top:36px;width:32px;background:#fff;"></div><div class="hl" style="left:0;top:53px;width:410px;background:#a0a0a0;"></div><div class="hl" style="left:0;top:54px;width:32px;background:#fff;"></div><div class="hl" style="left:0;top:71px;width:410px;background:#a0a0a0;"></div><div class="hl" style="left:0;top:72px;width:32px;background:#fff;"></div><div class="hl" style="left:0;top:89px;width:410px;background:#a0a0a0;"></div><div class="hl" style="left:0;top:90px;width:32px;background:#fff;"></div><div class="hl" style="left:0;top:107px;width:410px;background:#a0a0a0;"></div><div class="hl" style="left:0;top:108px;width:32px;background:#fff;"></div><div class="hl" style="left:0;top:125px;width:410px;background:#a0a0a0;"></div><div class="hl" style="left:0;top:126px;width:32px;background:#fff;"></div><div class="hl" style="left:0;top:143px;width:410px;background:#a0a0a0;"></div><div class="hl" style="left:0;top:144px;width:32px;background:#fff;"></div><div class="hl" style="left:0;top:161px;width:410px;background:#a0a0a0;"></div><div class="hl" style="left:0;top:162px;width:32px;background:#fff;"></div><div class="hl" style="left:0;top:179px;width:410px;background:#a0a0a0;"></div><div class="hl" style="left:0;top:180px;width:32px;background:#fff;"></div><div class="hl" style="left:0;top:197px;width:410px;background:#a0a0a0;"></div><div class="hl" style="left:0;top:198px;width:32px;background:#fff;"></div><div class="hl" style="left:0;top:215px;width:410px;background:#a0a0a0;"></div><div class="hl" style="left:0;top:216px;width:32px;background:#fff;"></div><div class="hl" style="left:0;top:233px;width:410px;background:#a0a0a0;"></div><div class="hl" style="left:0;top:234px;width:32px;background:#fff;"></div><div class="hl" style="left:0;top:251px;width:410px;background:#a0a0a0;"></div><div class="hl" style="left:0;top:252px;width:32px;background:#fff;"></div><div class="hl" style="left:0;top:269px;width:410px;background:#a0a0a0;"></div><div class="hl" style="left:0;top:270px;width:32px;background:#fff;"></div><div class="hl" style="left:0;top:287px;width:410px;background:#a0a0a0;"></div><div class="hl" style="left:0;top:288px;width:32px;background:#fff;"></div><div class="hl" style="left:0;top:305px;width:410px;background:#a0a0a0;"></div><div class="hl" style="left:0;top:306px;width:32px;background:#fff;"></div><div class="hl" style="left:0;top:323px;width:410px;background:#a0a0a0;"></div><div class="hl" style="left:0;top:324px;width:32px;background:#fff;"></div><div class="hl" style="left:0;top:341px;width:410px;background:#a0a0a0;"></div><div class="hl" style="left:0;top:342px;width:32px;background:#fff;"></div><div class="hl" style="left:0;top:359px;width:410px;background:#a0a0a0;"></div><div class="hl" style="left:0;top:360px;width:32px;background:#fff;"></div><div class="hl" style="left:0;top:377px;width:410px;background:#a0a0a0;"></div><div class="hl" style="left:0;top:378px;width:32px;background:#fff;"></div><div class="hl" style="left:0;top:395px;width:410px;background:#a0a0a0;"></div><div class="hl" style="left:0;top:396px;width:32px;background:#fff;"></div><div class="hl" style="left:0;top:413px;width:410px;background:#a0a0a0;"></div><div class="hl" style="left:0;top:414px;width:32px;background:#fff;"></div><div class="hl" style="left:0;top:431px;width:410px;background:#a0a0a0;"></div><div class="hl" style="left:0;top:432px;width:32px;background:#fff;"></div><div class="hl" style="left:0;top:449px;width:410px;background:#a0a0a0;"></div><div class="hl" style="left:0;top:450px;width:32px;background:#fff;"></div><div class="hl" style="left:0;top:467px;width:410px;background:#a0a0a0;"></div><div class="hl" style="left:0;top:468px;width:32px;background:#fff;"></div><div class="hl" style="left:0;top:485px;width:410px;background:#a0a0a0;"></div><div class="hl" style="left:0;top:486px;width:32px;background:#fff;"></div><div class="hl" style="left:0;top:503px;width:410px;background:#a0a0a0;"></div><div class="hl" style="left:0;top:504px;width:32px;background:#fff;"></div><div class="hl" style="left:0;top:521px;width:410px;background:#a0a0a0;"></div><div class="hl" style="left:0;top:522px;width:32px;background:#fff;"></div><div class="hl" style="left:0;top:539px;width:410px;background:#a0a0a0;"></div><div class="hl" style="left:0;top:540px;width:32px;background:#fff;"></div><div class="hl" style="left:0;top:557px;width:410px;background:#a0a0a0;"></div><div class="hl" style="left:0;top:558px;width:32px;background:#fff;"></div><div class="cell" style="left:0;width:32px;top:19px;">1</div><div class="cell" style="left:33px;width:190px;top:19px;">0.63</div><div class="cell" style="left:224px;width:185px;top:19px;">1454.12</div><div class="cell" style="left:0;width:32px;top:37px;">2</div><div class="cell" style="left:33px;width:190px;top:37px;">0.82</div><div class="cell" style="left:224px;width:185px;top:37px;">1454.16</div><div class="cell" style="left:0;width:32px;top:55px;">3</div><div class="cell" style="left:33px;width:190px;top:55px;">0.93</div><div class="cell" style="left:224px;width:185px;top:55px;">1454.38</div><div class="cell" style="left:0;width:32px;top:73px;">4</div><div class="cell" style="left:33px;width:190px;top:73px;">1.03</div><div class="cell" style="left:224px;width:185px;top:73px;">1454.16</div><div class="cell" style="left:0;width:32px;top:91px;">5</div><div class="cell" style="left:33px;width:190px;top:91px;">1.14</div><div class="cell" style="left:224px;width:185px;top:91px;">1453.97</div><div class="cell" style="left:0;width:32px;top:109px;">6</div><div class="cell" style="left:33px;width:190px;top:109px;">1.23</div><div class="cell" style="left:224px;width:185px;top:109px;">1454.08</div><div class="cell" style="left:0;width:32px;top:127px;">7</div><div class="cell" style="left:33px;width:190px;top:127px;">1.34</div><div class="cell" style="left:224px;width:185px;top:127px;">1453.40</div><div class="cell" style="left:0;width:32px;top:145px;">8</div><div class="cell" style="left:33px;width:190px;top:145px;">1.44</div><div class="cell" style="left:224px;width:185px;top:145px;">1453.75</div><div class="cell" style="left:0;width:32px;top:163px;">9</div><div class="cell" style="left:33px;width:190px;top:163px;">1.56</div><div class="cell" style="left:224px;width:185px;top:163px;">1453.34</div><div class="cell" style="left:0;width:32px;top:181px;">10</div><div class="cell" style="left:33px;width:190px;top:181px;">1.64</div><div class="cell" style="left:224px;width:185px;top:181px;">1453.11</div><div class="cell" style="left:0;width:32px;top:199px;">11</div><div class="cell" style="left:33px;width:190px;top:199px;">1.75</div><div class="cell" style="left:224px;width:185px;top:199px;">1453.29</div><div class="cell" style="left:0;width:32px;top:217px;">12</div><div class="cell" style="left:33px;width:190px;top:217px;">1.85</div><div class="cell" style="left:224px;width:185px;top:217px;">1452.88</div><div class="cell" style="left:0;width:32px;top:235px;">13</div><div class="cell" style="left:33px;width:190px;top:235px;">1.94</div><div class="cell" style="left:224px;width:185px;top:235px;">1452.75</div><div class="cell" style="left:0;width:32px;top:253px;">14</div><div class="cell" style="left:33px;width:190px;top:253px;">2.07</div><div class="cell" style="left:224px;width:185px;top:253px;">1452.37</div><div class="cell" style="left:0;width:32px;top:271px;">15</div><div class="cell" style="left:33px;width:190px;top:271px;">2.15</div><div class="cell" style="left:224px;width:185px;top:271px;">1452.09</div><div class="cell" style="left:0;width:32px;top:289px;">16</div><div class="cell" style="left:33px;width:190px;top:289px;">2.26</div><div class="cell" style="left:224px;width:185px;top:289px;">1451.81</div><div class="cell" style="left:0;width:32px;top:307px;">17</div><div class="cell" style="left:33px;width:190px;top:307px;">2.40</div><div class="cell" style="left:224px;width:185px;top:307px;">1451.68</div><div class="cell" style="left:0;width:32px;top:325px;">18</div><div class="cell" style="left:33px;width:190px;top:325px;">2.48</div><div class="cell" style="left:224px;width:185px;top:325px;">1451.62</div><div class="cell" style="left:0;width:32px;top:343px;">19</div><div class="cell" style="left:33px;width:190px;top:343px;">2.57</div><div class="cell" style="left:224px;width:185px;top:343px;">1451.56</div><div class="cell" style="left:0;width:32px;top:361px;">20</div><div class="cell" style="left:33px;width:190px;top:361px;">2.70</div><div class="cell" style="left:224px;width:185px;top:361px;">1451.63</div><div class="cell" style="left:0;width:32px;top:379px;">21</div><div class="cell" style="left:33px;width:190px;top:379px;">2.77</div><div class="cell" style="left:224px;width:185px;top:379px;">1451.54</div><div class="cell" style="left:0;width:32px;top:397px;">22</div><div class="cell" style="left:33px;width:190px;top:397px;">2.90</div><div class="cell" style="left:224px;width:185px;top:397px;">1451.54</div><div class="cell" style="left:0;width:32px;top:415px;">23</div><div class="cell" style="left:33px;width:190px;top:415px;">2.97</div><div class="cell" style="left:224px;width:185px;top:415px;">1451.43</div><div class="cell" style="left:0;width:32px;top:433px;">24</div><div class="cell" style="left:33px;width:190px;top:433px;">3.10</div><div class="cell" style="left:224px;width:185px;top:433px;">1451.58</div><div class="cell" style="left:0;width:32px;top:451px;">25</div><div class="cell" style="left:33px;width:190px;top:451px;">3.17</div><div class="cell" style="left:224px;width:185px;top:451px;">1451.52</div><div class="cell" style="left:0;width:32px;top:469px;">26</div><div class="cell" style="left:33px;width:190px;top:469px;">3.28</div><div class="cell" style="left:224px;width:185px;top:469px;">1451.50</div><div class="cell" style="left:0;width:32px;top:487px;">27</div><div class="cell" style="left:33px;width:190px;top:487px;">3.39</div><div class="cell" style="left:224px;width:185px;top:487px;">1451.49</div><div class="cell" style="left:0;width:32px;top:505px;">28</div><div class="cell" style="left:33px;width:190px;top:505px;">3.49</div><div class="cell" style="left:224px;width:185px;top:505px;">1451.59</div><div class="cell" style="left:0;width:32px;top:523px;">29</div><div class="cell" style="left:33px;width:190px;top:523px;">3.58</div><div class="cell" style="left:224px;width:185px;top:523px;">1451.57</div><div class="a" style="left:33px;top:17px;width:1px;height:1px;background:#fff;"></div><div class="a" style="left:224px;top:17px;width:1px;height:1px;background:#fff;"></div><div class="vl" style="left:32px;top:0;height:543px;background:#a0a0a0;"></div><div class="vl" style="left:223px;top:0;height:543px;background:#a0a0a0;"></div><div class="vl" style="left:409px;top:0;height:543px;background:#a0a0a0;"></div><div class="a" style="left:410px;top:0;width:17px;height:543px;background:#f0f0f0;"></div><div class="a" style="left:411px;top:17px;width:15px;height:82px;background:#cdcdcd;"></div><svg class="a" style="left:414px;top:5px" width="9" height="7" viewBox="0 0 9 7"><path d="M1 5.7 L4.5 2.2 L8 5.7" fill="none" stroke="#606060" stroke-width="2"/></svg><svg class="a" style="left:414px;top:532px" width="9" height="7" viewBox="0 0 9 7"><path d="M1 1.3 L4.5 4.8 L8 1.3" fill="none" stroke="#606060" stroke-width="2"/></svg>
</div>
<div class="t s11" id="mean" style="left:124px;top:814px;letter-spacing:0.2px;">Mean:</div>
<div class="t s11" id="meanv" style="left:450px;top:814px;letter-spacing:0.2px;">1451.562</div>
<div class="a" style="left:562px;top:258px;width:438px;height:571px;border:1px solid;border-color:#a0a0a0 #fff #fff #a0a0a0;"><div class="a" style="left:0;top:0;right:0;bottom:0;border:1px solid #a0a0a0;background:#4682b4;"></div></div>
<svg class="a" style="left:564px;top:260px" width="434" height="567" viewBox="564 260 434 567"><polyline points="977.2,263.1 978.7,267.8 980.5,269.6 984,270.4 991.1,271.4 995.8,272.3 993.5,273.1 990,274.3 982.8,276.1 974.6,278.2 969.8,278.7 967.5,279.6 971.6,280.6 975.7,282.2 968,282.6 967.5,283.4 953.3,283.8 937.9,284.6 930.2,285.3 934.4,286.1 941.5,287 953.9,288.2 949.7,289.1 943.2,289.7 936.7,291.2 929.6,292.1 922,292.9 914.3,293.8 910.1,294.4 914.3,295.6 920.2,296.8 923.7,297.4 919,298 914.3,298.6 907.2,300 900,301.3 894,301.9 884.3,303.5 872.4,305.7 859.4,307.6 847.4,309.5 835.5,311.5 829,312.5 824.5,313.1 819.3,315.5 813.8,318.4 808.4,322 813.5,326.4 808.1,328.1 807,333.6 799.4,334.1 809.6,338.5 806.4,342.3 804.1,347.8 809.8,351.8 809.2,352.9 815.5,356.3 806.4,359.7 802.2,361.4 807.5,362.3 804.1,367.1 798.4,370.5 790.3,372.2 796.2,375.1 798.4,378.5 797.3,381.9 798.2,384.8 794.5,391.3 801.5,394.3 794.5,397.3 802.7,400 803.8,403.2 816.9,404.9 830.8,406.4 811.8,409.1 809.5,412.9 804.4,415.5 790.5,425.4 800.4,428.2 787.5,434.5 793.6,440.2 785.3,445.5 793.6,447.3 794.7,450.4 802.7,453.5 794.1,456.7 790.7,462.4 790.5,470.9 785.6,473.2 786.2,476 783.3,478.5 786.4,482.4 783.2,486.4 792.3,492.3 786.6,494.6 788.7,497.8 797.2,503.4 796.4,509.7 789.6,514.2 788.9,520.5 786.4,522.2 786.4,533 785.3,538.7 786.4,543.3 790.4,547.2 791,550.3 797.8,553.3 812.3,556.3 800.1,562.6 788.7,565.4 792.3,568.3 786.4,575.5 792.1,580.4 791.5,588.9 794.1,590.6 792.3,599.1 792.3,603.7 806.9,606 808.2,609.9 798.9,613.4 794.6,616.2 799.5,618.2 796.1,623 792.3,625.3 797.2,635.5 789.2,641.8 794.4,647.5 792.3,650.3 799.5,659.4 796.4,662.4 801.5,666.4 796.4,670.4 795.5,673.2 797.3,676.4 792.4,684 798.7,687.4 799.2,689.7 796.4,693.7 803.2,699.1 803.8,706.2 806.6,709.4 816.9,710.7 827.7,712.5 825.4,716.4 812.3,718.7 810.3,722.1 812.6,726.4 809.5,727.8 807.2,734.6 809.5,742 807.8,743.2 810.3,746.3 807.4,753.9 811.5,762.2 809.5,765.3 809.5,769.2 811.7,771.6 811.5,775.5 808.4,778.7 811.5,780.6 807.4,787.6 807.6,790.9 809.5,794.8 809.5,809.3 811.5,812.7 810.5,814.6 811.5,819.5 811.5,820.5 770,820.5 770,821.5 688,821.5 688,822.5 627,822.5 627,823.5 587,823.5 587,824.5 568,824.5" fill="none" stroke="#f7d008" stroke-width="1" stroke-linejoin="round" shape-rendering="crispEdges"/></svg>
<svg class="a" style="left:1001px;top:865px" width="13" height="13" viewBox="1001 865 13 13" shape-rendering="crispEdges"><rect x="1003" y="877" width="1" height="1" fill="#fff"/><rect x="1004" y="876" width="1" height="1" fill="#fff"/><rect x="1005" y="875" width="1" height="1" fill="#fff"/><rect x="1006" y="874" width="1" height="1" fill="#fff"/><rect x="1007" y="873" width="1" height="1" fill="#fff"/><rect x="1008" y="872" width="1" height="1" fill="#fff"/><rect x="1009" y="871" width="1" height="1" fill="#fff"/><rect x="1010" y="870" width="1" height="1" fill="#fff"/><rect x="1011" y="869" width="1" height="1" fill="#fff"/><rect x="1012" y="868" width="1" height="1" fill="#fff"/><rect x="1013" y="867" width="1" height="1" fill="#fff"/><rect x="1004" y="877" width="1" height="1" fill="#a0a0a0"/><rect x="1005" y="876" width="1" height="1" fill="#a0a0a0"/><rect x="1006" y="875" width="1" height="1" fill="#a0a0a0"/><rect x="1007" y="874" width="1" height="1" fill="#a0a0a0"/><rect x="1008" y="873" width="1" height="1" fill="#a0a0a0"/><rect x="1009" y="872" width="1" height="1" fill="#a0a0a0"/><rect x="1010" y="871" width="1" height="1" fill="#a0a0a0"/><rect x="1011" y="870" width="1" height="1" fill="#a0a0a0"/><rect x="1012" y="869" width="1" height="1" fill="#a0a0a0"/><rect x="1013" y="868" width="1" height="1" fill="#a0a0a0"/><rect x="1005" y="877" width="1" height="1" fill="#a0a0a0"/><rect x="1006" y="876" width="1" height="1" fill="#a0a0a0"/><rect x="1007" y="875" width="1" height="1" fill="#a0a0a0"/><rect x="1008" y="874" width="1" height="1" fill="#a0a0a0"/><rect x="1009" y="873" width="1" height="1" fill="#a0a0a0"/><rect x="1010" y="872" width="1" height="1" fill="#a0a0a0"/><rect x="1011" y="871" width="1" height="1" fill="#a0a0a0"/><rect x="1012" y="870" width="1" height="1" fill="#a0a0a0"/><rect x="1013" y="869" width="1" height="1" fill="#a0a0a0"/><rect x="1007" y="877" width="1" height="1" fill="#fff"/><rect x="1008" y="876" width="1" height="1" fill="#fff"/><rect x="1009" y="875" width="1" height="1" fill="#fff"/><rect x="1010" y="874" width="1" height="1" fill="#fff"/><rect x="1011" y="873" width="1" height="1" fill="#fff"/><rect x="1012" y="872" width="1" height="1" fill="#fff"/><rect x="1013" y="871" width="1" height="1" fill="#fff"/><rect x="1008" y="877" width="1" height="1" fill="#a0a0a0"/><rect x="1009" y="876" width="1" height="1" fill="#a0a0a0"/><rect x="1010" y="875" width="1" height="1" fill="#a0a0a0"/><rect x="1011" y="874" width="1" height="1" fill="#a0a0a0"/><rect x="1012" y="873" width="1" height="1" fill="#a0a0a0"/><rect x="1013" y="872" width="1" height="1" fill="#a0a0a0"/><rect x="1009" y="877" width="1" height="1" fill="#a0a0a0"/><rect x="1010" y="876" width="1" height="1" fill="#a0a0a0"/><rect x="1011" y="875" width="1" height="1" fill="#a0a0a0"/><rect x="1012" y="874" width="1" height="1" fill="#a0a0a0"/><rect x="1013" y="873" width="1" height="1" fill="#a0a0a0"/><rect x="1011" y="877" width="1" height="1" fill="#fff"/><rect x="1012" y="876" width="1" height="1" fill="#fff"/><rect x="1013" y="875" width="1" height="1" fill="#fff"/><rect x="1012" y="877" width="1" height="1" fill="#a0a0a0"/><rect x="1013" y="876" width="1" height="1" fill="#a0a0a0"/><rect x="1013" y="877" width="1" height="1" fill="#a0a0a0"/></svg>
<div class="a" style="left:115px;top:849px;width:75px;height:23px;border:1px solid #696969;"></div><div class="btn" style="left:116px;top:850px;width:73px;height:21px;"><div class="in"></div><div class="lb" id="bok" style="top:4px;">OK</div></div>
<div class="btn" style="left:196px;top:849px;width:75px;height:23px;"><div class="in"></div><div class="lb" id="bap" style="top:5px;">Apply</div></div>
<div class="btn" style="left:277px;top:849px;width:75px;height:23px;"><div class="in"></div><div class="lb" id="bca" style="top:5px;">Cancel</div></div>
<div class="btn" style="left:935px;top:849px;width:75px;height:23px;"><div class="in"></div><div class="lb" id="bhe" style="top:5px;">Help</div></div>
</body></html>
